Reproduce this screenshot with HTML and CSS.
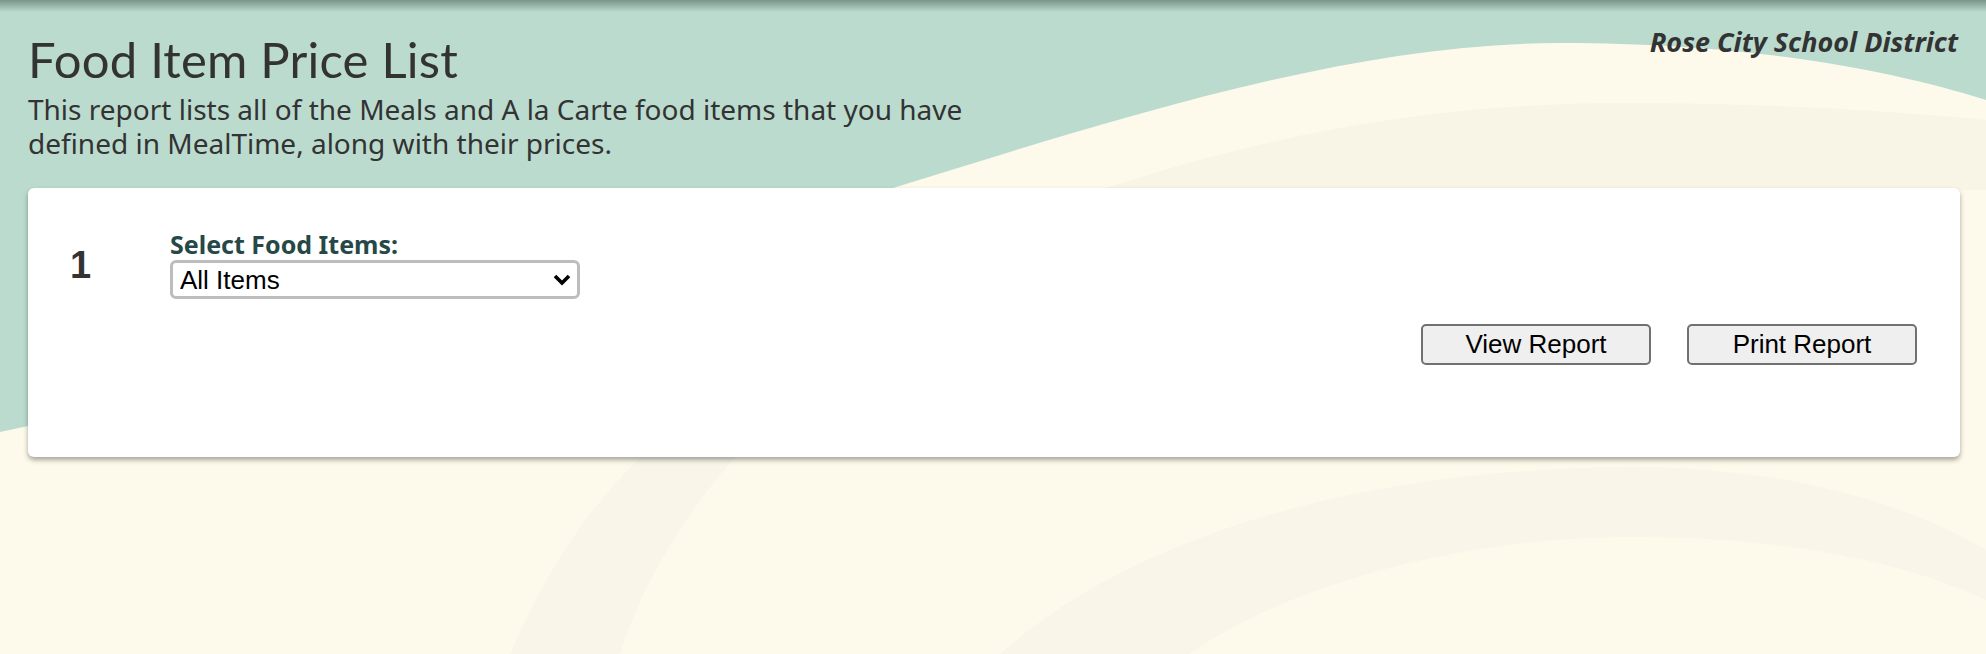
FILE: index.html
```html
<!DOCTYPE html>
<html lang="en">
<head>
<meta charset="utf-8">
<title>Food Item Price List</title>
<link rel="stylesheet" href="styles.css">
</head>
<body>
<div class="backdrop" aria-hidden="true">
  <svg class="backdrop-art" width="1986" height="654" viewBox="0 0 1986 654" preserveAspectRatio="none">
    <rect x="0" y="0" width="1986" height="654" fill="#bbdbcf"/>
    <path d="M0,432 C300,370 620,270 893,188 C1120,118 1350,43 1560,43 C1750,43 1890,70 1986,100 L1986,654 L0,654 Z" fill="#fefaeb"/>
    <path d="M1100,190 C1280,130 1450,103 1620,103 C1780,103 1900,112 1986,120 L1986,190 Z" fill="#f8f4e6"/>
    <path d="M510,654 C550,560 610,470 690,420 L770,420 C710,480 650,560 620,654 Z" fill="#f9f6e9"/>
    <path d="M1000,654 C1150,520 1400,467 1633,467 C1800,467 1920,510 1986,550 L1986,600 C1900,560 1780,537 1633,537 C1450,537 1280,590 1190,654 Z" fill="#f9f6e9"/>
  </svg>
  <div class="backdrop-shade"></div>
</div>

<header class="header">
  <div class="intro">
    <h1 class="title">Food Item Price List</h1>
    <p class="desc">This report lists all of the Meals and A la Carte food items that you have<br>defined in MealTime, along with their prices.</p>
  </div>
  <div class="district">Rose City School District</div>
</header>

<main class="card">
  <div class="step">
    <div class="step-num">1</div>
    <div class="field">
      <label class="field-label" for="items">Select Food Items:</label>
      <div class="select-wrap">
        <select id="items" class="select">
          <option>All Items</option>
        </select>
        <svg class="chevron" width="20" height="14" viewBox="0 0 20 14" aria-hidden="true">
          <path d="M3 3 L10 10 L17 3" fill="none" stroke="#000" stroke-width="3.6" stroke-linecap="butt" stroke-linejoin="miter"/>
        </svg>
      </div>
    </div>
  </div>
  <div class="actions">
    <button class="btn" type="button">View Report</button>
    <button class="btn" type="button">Print Report</button>
  </div>
</main>
</body>
</html>
```

FILE: styles.css
```css
html, body {
  margin: 0;
  padding: 0;
}

body {
  position: relative;
  width: 1986px;
  height: 654px;
  overflow: hidden;
  background: #fefaeb;
  color: #333333;
  font-family: "Noto Sans", "Open Sans", sans-serif;
}

.backdrop {
  position: absolute;
  inset: 0;
  z-index: 0;
}

.backdrop-art {
  display: block;
}

.backdrop-shade {
  position: absolute;
  left: 0;
  right: 0;
  top: 0;
  height: 12px;
  background: linear-gradient(to bottom, rgba(40, 60, 55, 0.45), rgba(40, 60, 55, 0));
}

.header {
  position: relative;
  z-index: 1;
  display: flex;
  justify-content: space-between;
  align-items: flex-start;
  padding: 27px 28px 0 28px;
}

.title {
  margin: 5px 0 0 0;
  font-family: Lato, "Noto Sans", sans-serif;
  font-size: 49px;
  line-height: 54px;
  font-weight: 400;
  letter-spacing: 0.2px;
  color: #333333;
}

.desc {
  margin: 6px 0 0 0;
  font-size: 28px;
  line-height: 34px;
  color: #333333;
}

.district {
  font-size: 27px;
  line-height: 30px;
  font-weight: 700;
  font-style: italic;
  color: #333333;
}

.card {
  position: relative;
  z-index: 1;
  margin: 28px 26px 0 28px;
  height: 269px;
  box-sizing: border-box;
  padding: 42px 43px 0 42px;
  background: #ffffff;
  border-radius: 6px;
  box-shadow: 0 3px 5px rgba(0, 0, 0, 0.35);
}

.step {
  display: flex;
  align-items: flex-start;
}

.step-num {
  width: 100px;
  margin-top: 13px;
  font-family: "Liberation Sans", Arial, sans-serif;
  font-size: 38px;
  line-height: 44px;
  font-weight: 700;
  color: #333333;
}

.field {
  display: flex;
  flex-direction: column;
  gap: 2px;
}

.field-label {
  font-size: 25px;
  line-height: 28px;
  font-weight: 700;
  color: #264847;
}

.select-wrap {
  position: relative;
  width: 410px;
  height: 39px;
}

.select {
  appearance: none;
  -webkit-appearance: none;
  width: 410px;
  height: 39px;
  box-sizing: border-box;
  margin: 0;
  padding: 0 0 0 7px;
  border: 3px solid #bdbdbd;
  border-radius: 6px;
  background: #ffffff;
  font-family: "Liberation Sans", Arial, sans-serif;
  font-size: 26px;
  color: #000000;
}

.chevron {
  position: absolute;
  right: 8px;
  top: 13px;
  pointer-events: none;
}

.actions {
  display: flex;
  justify-content: flex-end;
  gap: 36px;
  margin-top: 25px;
}

.btn {
  width: 230px;
  height: 41px;
  box-sizing: border-box;
  margin: 0;
  padding: 0;
  border: 2px solid #717171;
  border-radius: 5px;
  background: #efefef;
  font-family: "Liberation Sans", Arial, sans-serif;
  font-size: 26px;
  color: #000000;
}
```
